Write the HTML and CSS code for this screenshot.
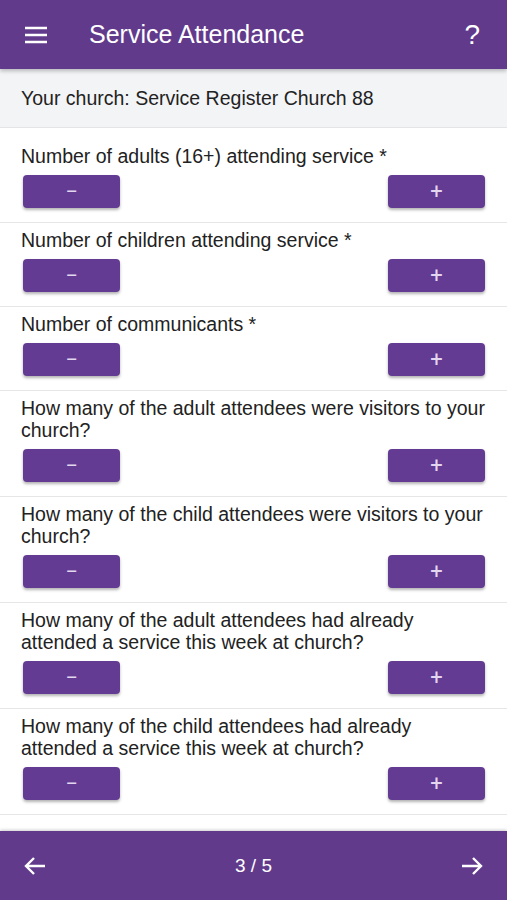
FILE: index.html
```html
<!DOCTYPE html>
<html lang="en">
  <head>
    <meta charset="UTF-8" />
    <meta name="viewport" content="width=device-width, initial-scale=1.0" />
    <title>Service Attendance</title>
    <link rel="stylesheet" href="styles.css">
  </head>
  <body>
    <header class="topbar">
      <svg class="menu-icon" width="24" height="24" viewBox="0 0 24 24">
        <path d="M1 5h22M1 12h22M1 19h22" stroke="#fff" stroke-width="2.4" fill="none" />
      </svg>
      <h1 class="title">Service Attendance</h1>
      <span class="help">?</span>
    </header>

    <div class="church">Your church: Service Register Church 88</div>

    <main class="questions">
      <div class="question first">
        <p class="label">Number of adults (16+) attending service *</p>
        <div class="buttons">
          <button class="step">&minus;</button>
          <button class="step">+</button>
        </div>
      </div>
      <div class="question">
        <p class="label">Number of children attending service *</p>
        <div class="buttons">
          <button class="step">&minus;</button>
          <button class="step">+</button>
        </div>
      </div>
      <div class="question">
        <p class="label">Number of communicants *</p>
        <div class="buttons">
          <button class="step">&minus;</button>
          <button class="step">+</button>
        </div>
      </div>
      <div class="question">
        <p class="label">How many of the adult attendees were visitors to your church?</p>
        <div class="buttons">
          <button class="step">&minus;</button>
          <button class="step">+</button>
        </div>
      </div>
      <div class="question">
        <p class="label">How many of the child attendees were visitors to your church?</p>
        <div class="buttons">
          <button class="step">&minus;</button>
          <button class="step">+</button>
        </div>
      </div>
      <div class="question">
        <p class="label">How many of the adult attendees had already attended a service this week at church?</p>
        <div class="buttons">
          <button class="step">&minus;</button>
          <button class="step">+</button>
        </div>
      </div>
      <div class="question">
        <p class="label">How many of the child attendees had already attended a service this week at church?</p>
        <div class="buttons">
          <button class="step">&minus;</button>
          <button class="step">+</button>
        </div>
      </div>
    </main>

    <footer class="bottombar">
      <svg width="24" height="24" viewBox="0 0 24 24">
        <path d="M22 12H3M11 4l-8 8 8 8" stroke="#fff" stroke-width="2.4" fill="none" />
      </svg>
      <span class="pager">3 / 5</span>
      <svg width="24" height="24" viewBox="0 0 24 24">
        <path d="M2 12h19M13 4l8 8-8 8" stroke="#fff" stroke-width="2.4" fill="none" />
      </svg>
    </footer>
  </body>
</html>
```

FILE: styles.css
```css
body {
  margin: 0;
  font-family: "Liberation Sans", Arial, sans-serif;
  color: #222;
  background-color: white;
  height: 900px;
  display: flex;
  flex-direction: column;
  overflow: hidden;
}

.topbar {
  height: 69px;
  background-color: #623a8c;
  color: white;
  display: flex;
  align-items: center;
  padding: 0 24px;
  box-shadow: 0 2px 4px rgba(0, 0, 0, 0.25);
  position: relative;
  z-index: 1;
}

.menu-icon {
  margin-top: 1px;
}

.title {
  margin: 0 0 0 41px;
  font-size: 25px;
  font-weight: normal;
  flex: 1;
}

.help {
  font-size: 28px;
  margin-right: 3px;
}

.church {
  height: 58px;
  line-height: 58px;
  padding-left: 21px;
  font-size: 19.5px;
  background-color: #f3f4f6;
  border-bottom: 1px solid #e4e4e6;
}

.questions {
  flex: 1;
  padding-top: 11px;
}

.question {
  padding: 6px 22px 14px 21px;
  border-bottom: 1px solid #e6e6e6;
}

.label {
  margin: 0;
  font-size: 19.5px;
  line-height: 22px;
}

.buttons {
  display: flex;
  justify-content: space-between;
  margin-top: 8px;
  padding-left: 2px;
}

.step {
  width: 97px;
  height: 33px;
  border: none;
  border-radius: 4px;
  background-color: #643b92;
  color: #e3d6ef;
  font-family: Roboto, sans-serif;
  font-size: 22px;
  line-height: 33px;
  padding: 0;
  box-shadow: 0 2px 3px rgba(0, 0, 0, 0.3);
}

.bottombar {
  height: 69px;
  background-color: #623a8c;
  color: white;
  display: flex;
  align-items: center;
  justify-content: space-between;
  padding: 0 23px 0 23px;
  box-shadow: 0 -1px 3px rgba(0, 0, 0, 0.2);
}

.pager {
  font-size: 19px;
}
```
